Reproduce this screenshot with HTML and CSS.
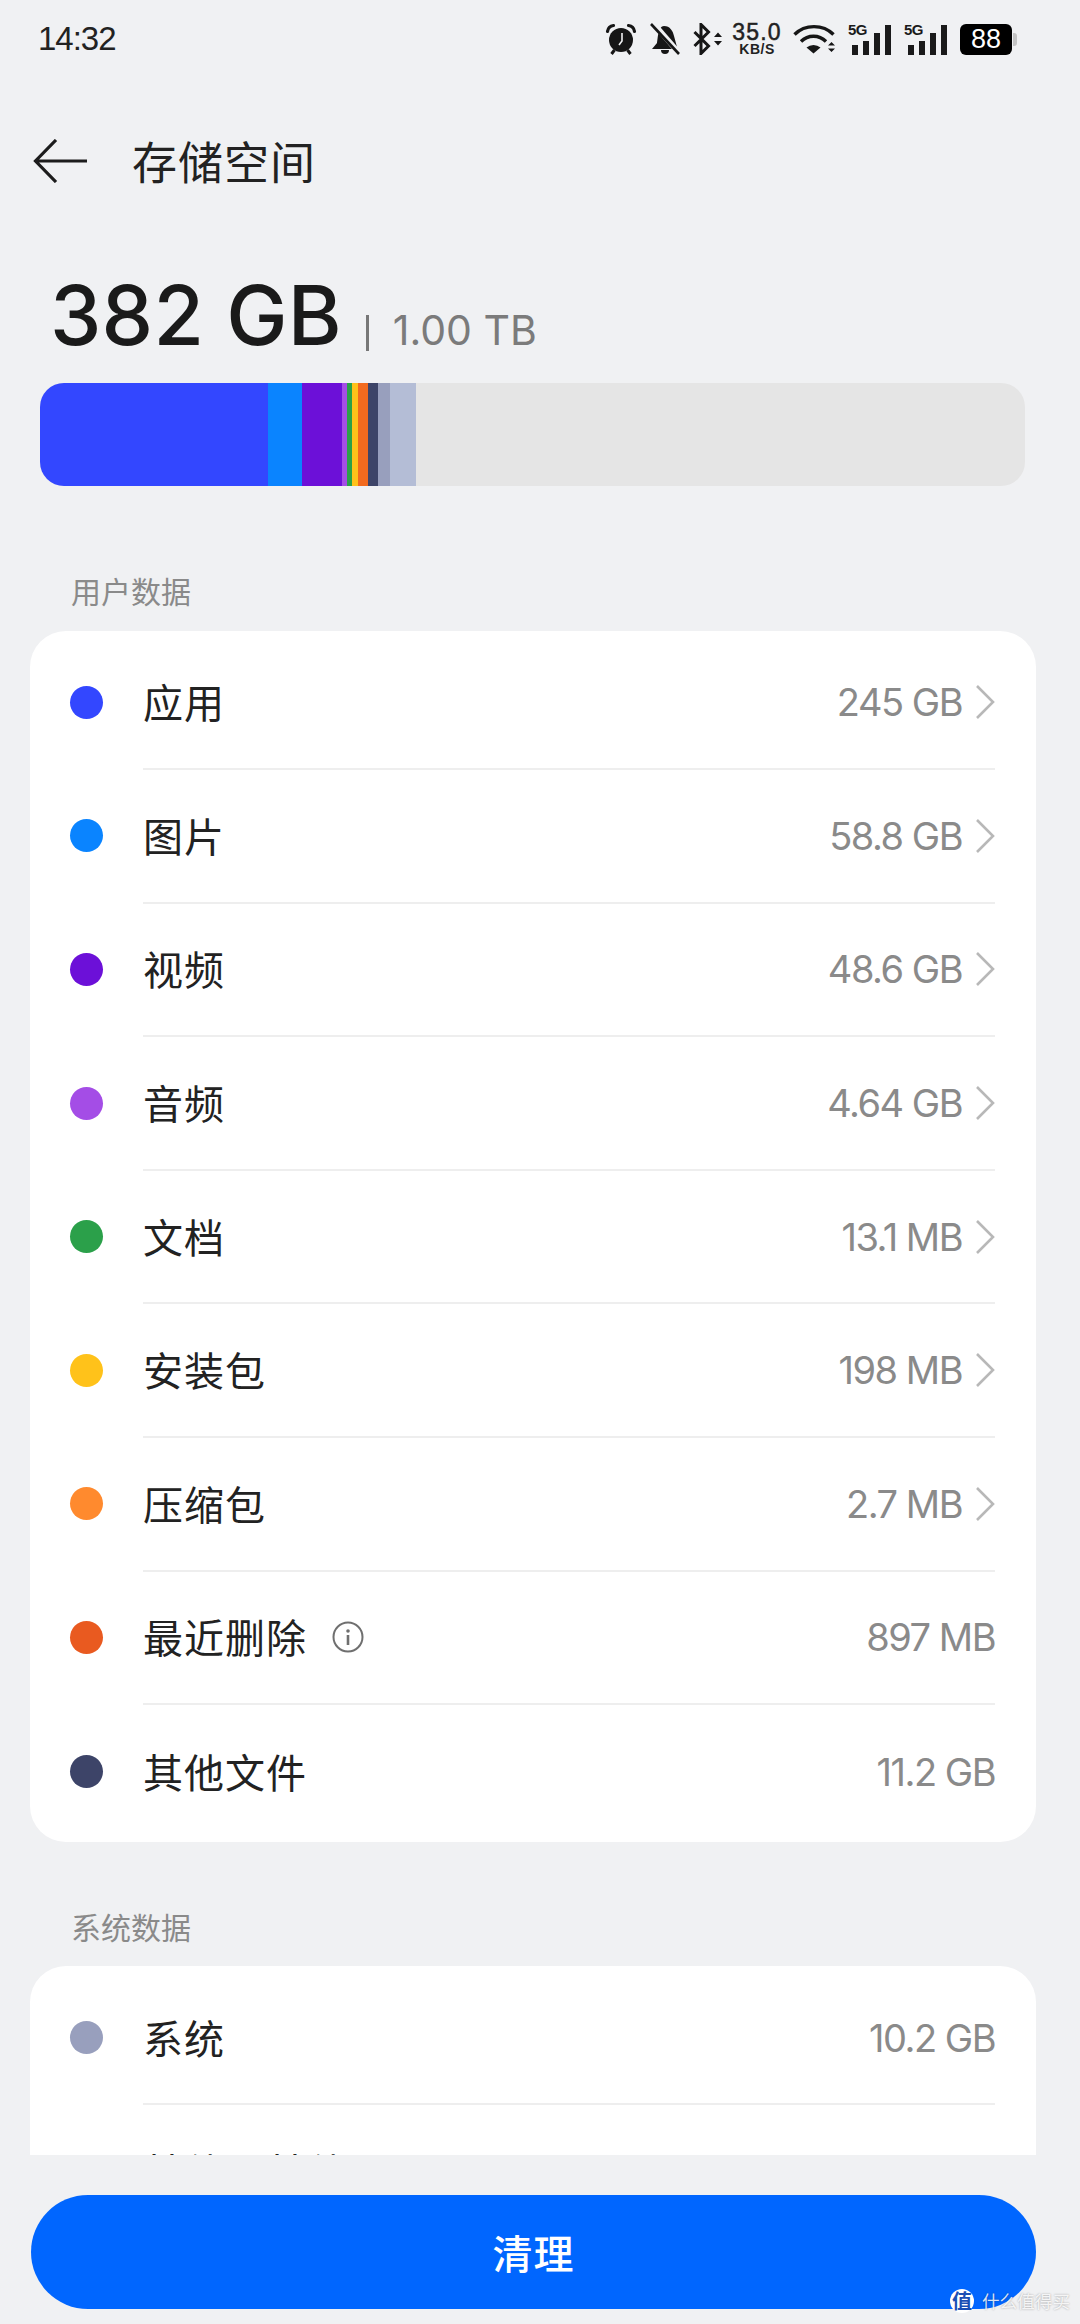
FILE: index.html
```html
<!DOCTYPE html>
<html lang="zh">
<head>
<meta charset="utf-8">
<title>存储空间</title>
<link rel="stylesheet" href="styles.css">
</head>
<body>
<div class="screen">
  <div class="status">
    <span class="time">14:32</span>
    <div class="status-icons">
      <svg class="ic" width="32" height="32" viewBox="0 0 32 32"><circle cx="16" cy="17" r="12" fill="#161616"/><path d="M2.500 8.500C3 5 5 3 8.500 2.500M29.500 8.500C29 5 27 3 23.500 2.500" stroke="#161616" stroke-width="3.200" fill="none" stroke-linecap="round"/><path d="M6.500 31l3-4M25.500 31l-3-4" stroke="#161616" stroke-width="3"/><path d="M17 10v8l-3 4" stroke="#f0f1f3" stroke-width="1.600" fill="none"/></svg>
      <svg class="ic" width="32" height="32" viewBox="0 0 32 32"><path d="M15 3c6 0 9 5 10 10l3 11-1 2H3l5-6c1-5 1-17 7-17z" fill="#161616"/><path d="M12 27a4 4 0 0 0 8 0z" fill="#161616"/><path d="M4 0l26 30" stroke="#f0f1f3" stroke-width="5.500"/><path d="M2 1l28 30" stroke="#161616" stroke-width="2.600"/></svg>
      <svg class="ic" width="32" height="32" viewBox="0 0 32 32"><path d="M1.500 9l14 14L8 30.500V1.500L15.500 9l-14 14" stroke="#161616" stroke-width="3" fill="none"/><path d="M21 14l4-4.500 4 4.500zM21 18l4 4.500 4-4.500z" fill="#161616"/></svg>
      <div class="speed"><span class="speed-n">35.0</span><span class="speed-u">KB/S</span></div>
      <svg class="ic ic-wifi" width="43" height="32" viewBox="0 0 43 32"><path d="M1.500 11.500C12 1 30 1 40.500 11.500M8 18.500C15 11.500 26 11.500 33 18.500" stroke="#161616" stroke-width="3.400" fill="none"/><path d="M13.500 24.500a11 11 0 0 1 14 0l-7 6z" fill="#161616"/><path d="M35 22.500l3.500-3.500 3.500 3.500zM35 25.500l3.500 3.500 3.500-3.500z" fill="#161616"/></svg>
      <div class="signal"><span class="five">5G</span><i class="b1"></i><i class="b2"></i><i class="b3"></i><i class="b4"></i></div>
      <div class="signal"><span class="five">5G</span><i class="b1"></i><i class="b2"></i><i class="b3"></i><i class="b4"></i></div>
      <div class="battery"><span class="batt-n">88</span></div>
    </div>
  </div>

  <div class="appbar">
    <svg class="back" width="54" height="44" viewBox="0 0 54 44"><path d="M23 1 2.500 22 23 43M2.500 22H54" stroke="#1c1c1c" stroke-width="3.200" fill="none"/></svg>
    <h1 class="page-title">存储空间</h1>
  </div>

  <div class="summary">
    <span class="used">382 GB</span>
    <span class="sep"></span>
    <span class="total">1.00 TB</span>
  </div>

  <div class="bar">
    <i class="seg s1"></i><i class="seg s2"></i><i class="seg s3"></i><i class="seg s4"></i><i class="seg s5"></i><i class="seg s6"></i><i class="seg s7"></i><i class="seg s8"></i><i class="seg s9"></i><i class="seg s10"></i>
  </div>

  <div class="scroll">
    <div class="section-label first">用户数据</div>
    <div class="card">
      <div class="row"><i class="dot d-apps"></i><div class="row-main"><span class="name">应用</span><span class="value">245 GB</span><svg class="chev" width="20" height="36" viewBox="0 0 20 36"><path d="M2 2l16 16L2 34" stroke="#b8b8b8" stroke-width="2.600" fill="none"/></svg></div></div>
      <div class="row"><i class="dot d-pic"></i><div class="row-main"><span class="name">图片</span><span class="value">58.8 GB</span><svg class="chev" width="20" height="36" viewBox="0 0 20 36"><path d="M2 2l16 16L2 34" stroke="#b8b8b8" stroke-width="2.600" fill="none"/></svg></div></div>
      <div class="row"><i class="dot d-vid"></i><div class="row-main"><span class="name">视频</span><span class="value">48.6 GB</span><svg class="chev" width="20" height="36" viewBox="0 0 20 36"><path d="M2 2l16 16L2 34" stroke="#b8b8b8" stroke-width="2.600" fill="none"/></svg></div></div>
      <div class="row"><i class="dot d-aud"></i><div class="row-main"><span class="name">音频</span><span class="value">4.64 GB</span><svg class="chev" width="20" height="36" viewBox="0 0 20 36"><path d="M2 2l16 16L2 34" stroke="#b8b8b8" stroke-width="2.600" fill="none"/></svg></div></div>
      <div class="row"><i class="dot d-doc"></i><div class="row-main"><span class="name">文档</span><span class="value">13.1 MB</span><svg class="chev" width="20" height="36" viewBox="0 0 20 36"><path d="M2 2l16 16L2 34" stroke="#b8b8b8" stroke-width="2.600" fill="none"/></svg></div></div>
      <div class="row"><i class="dot d-apk"></i><div class="row-main"><span class="name">安装包</span><span class="value">198 MB</span><svg class="chev" width="20" height="36" viewBox="0 0 20 36"><path d="M2 2l16 16L2 34" stroke="#b8b8b8" stroke-width="2.600" fill="none"/></svg></div></div>
      <div class="row"><i class="dot d-zip"></i><div class="row-main"><span class="name">压缩包</span><span class="value">2.7 MB</span><svg class="chev" width="20" height="36" viewBox="0 0 20 36"><path d="M2 2l16 16L2 34" stroke="#b8b8b8" stroke-width="2.600" fill="none"/></svg></div></div>
      <div class="row"><i class="dot d-del"></i><div class="row-main"><span class="name">最近删除</span><svg class="info" width="32" height="32" viewBox="0 0 32 32"><circle cx="16" cy="16" r="14.500" stroke="#6f6f6f" stroke-width="2" fill="none"/><circle cx="16" cy="10" r="1.800" fill="#6f6f6f"/><path d="M16 14v10" stroke="#6f6f6f" stroke-width="2.600"/></svg><span class="value">897 MB</span></div></div>
      <div class="row"><i class="dot d-oth"></i><div class="row-main"><span class="name">其他文件</span><span class="value">11.2 GB</span></div></div>
    </div>
    <div class="section-label">系统数据</div>
    <div class="card">
      <div class="row"><i class="dot d-sys"></i><div class="row-main"><span class="name">系统</span><span class="value">10.2 GB</span></div></div>
      <div class="row"><i class="dot d-cache"></i><div class="row-main"><span class="name">其他—其他</span></div></div>
    </div>
  </div>

  <div class="footer">
    <button class="clean">清理</button>
    <div class="watermark"><span class="wm-badge">值</span><span class="wm-text">什么值得买</span></div>
  </div>
</div>
</body>
</html>
```

FILE: styles.css
```css
* { box-sizing: border-box; margin: 0; padding: 0; }
html, body { width: 1080px; height: 2324px; overflow: hidden; background: #f0f1f3; }
body { font-family: "Inter", "Liberation Sans", "Noto Sans CJK SC", sans-serif; color: #1a1a1a; }
.screen { width: 1080px; height: 2324px; display: flex; flex-direction: column; }

.status { height: 74px; flex: none; padding: 22px 68px 0 38px; display: flex; justify-content: space-between; align-items: flex-start; }
.time { font-family: "Liberation Sans", sans-serif; font-size: 33px; line-height: 34px; color: #222; letter-spacing: -1px; }
.status-icons { display: flex; align-items: center; height: 34px; gap: 12px; }
.ic { display: block; flex: none; }
.speed { width: 48px; margin-left: -4px; display: flex; flex-direction: column; align-items: center; font-family: "Liberation Sans", sans-serif; color: #222; }
.speed-n { font-size: 23px; line-height: 19px; letter-spacing: 1.200px; -webkit-text-stroke: .5px #222; white-space: nowrap; }
.speed-u { font-size: 14px; line-height: 14px; font-weight: 700; letter-spacing: .5px; }
.signal { width: 44px; height: 32px; flex: none; position: relative; display: flex; align-items: flex-end; gap: 5px; padding-left: 4px; }
.signal i { width: 6px; background: #1a1a1a; display: block; }
.signal .b1 { height: 10px; }
.signal .b2 { height: 14px; }
.signal .b3 { height: 22px; }
.signal .b4 { height: 30px; }
.five { position: absolute; left: 0; top: 0; font-family: "Liberation Sans", sans-serif; font-size: 15px; font-weight: 700; letter-spacing: -.5px; line-height: 14px; }
.battery { width: 52px; height: 31px; flex: none; background: #000; border-radius: 6px; display: flex; align-items: center; justify-content: center; position: relative; }
.battery::after { content: ""; position: absolute; left: 53px; top: 9px; width: 4px; height: 13px; border-radius: 0 3px 3px 0; background: #c4c4c4; }
.batt-n { color: #fff; font-family: "Liberation Sans", sans-serif; font-size: 27px; line-height: 31px; }

.appbar { height: 74px; flex: none; margin-top: 50px; padding-left: 33px; display: flex; align-items: center; }
.back { display: block; flex: none; }
.page-title { font-family: "Noto Sans CJK SC", sans-serif; font-size: 45px; font-weight: 400; line-height: 60px; margin-left: 45px; letter-spacing: 1px; color: #222; }

.summary { margin-top: 69px; padding-left: 50px; height: 97px; flex: none; display: flex; align-items: baseline; }
.used { font-family: "Inter", sans-serif; font-size: 82px; line-height: 97px; font-weight: 500; color: #1a1a1a; letter-spacing: .2px; }
.sep { width: 3px; height: 36px; background: #777; margin-left: 24px; position: relative; top: 6px; }
.total { font-size: 41px; color: #7b7b7b; margin-left: 24px; letter-spacing: 0; }

.bar { margin: 19px 55px 0 40px; height: 103px; flex: none; border-radius: 24px; overflow: hidden; background: #e5e5e5; display: flex; }
.seg { display: block; height: 100%; flex: none; }
.s1 { width: 228px; background: #3347ff; }
.s2 { width: 34px; background: #0a84ff; }
.s3 { width: 40px; background: #6c10d8; }
.s4 { width: 5px; background: #a44de6; }
.s5 { width: 5px; background: #2ba04a; }
.s6 { width: 6px; background: #ffc21a; }
.s7 { width: 9.500px; background: #f26a1e; }
.s8 { width: 10.500px; background: #3d4468; }
.s9 { width: 12px; background: #989fbd; }
.s10 { width: 26px; background: #b4bdd6; }

.scroll { flex: 1; min-height: 0; overflow: hidden; padding: 0 44px 0 30px; }
.section-label { font-family: "Noto Sans CJK SC", sans-serif; font-size: 30px; line-height: 40px; color: #8a8a8a; padding-left: 41px; margin-top: 64px; margin-bottom: 20px; }
.section-label.first { margin-top: 84px; margin-bottom: 21px; }
.card { background: #fff; border-radius: 36px; padding: 5.500px 0 3.500px; }
.row { height: 133.600px; display: flex; align-items: center; padding-left: 40px; }
.dot { width: 33px; height: 33px; border-radius: 50%; flex: none; margin-right: 40px; position: relative; top: -1px; }
.d-apps { background: #3347ff; }
.d-pic { background: #0a84ff; }
.d-vid { background: #6c10d8; }
.d-aud { background: #a44de6; }
.d-doc { background: #2ba04a; }
.d-apk { background: #ffc21a; }
.d-zip { background: #ff8a2e; }
.d-del { background: #e95a20; }
.d-oth { background: #3d4468; }
.d-sys { background: #989fbd; }
.d-cache { background: #b4bdd6; }
.row-main { flex: 1; height: 100%; margin-right: 41px; display: flex; align-items: center; border-bottom: 2px solid #eeeeee; }
.row:last-child .row-main { border-bottom: none; }
.name { font-family: "Noto Sans CJK SC", sans-serif; font-size: 40px; line-height: 56px; padding-bottom: 2px; color: #222; letter-spacing: 1px; }
.value { margin-left: auto; font-size: 38px; color: #8a8a8a; letter-spacing: -1.500px; }
.chev { margin-left: 13px; display: block; flex: none; }
.info { margin-left: 25px; display: block; flex: none; }

.footer { height: 169px; flex: none; position: relative; padding: 40px 44px 0 31px; }
.clean { display: block; width: 1005px; height: 114px; border: none; border-radius: 57px; background: #0066ff; color: #fff; font-family: "Noto Sans CJK SC", sans-serif; font-size: 40px; font-weight: 500; letter-spacing: 1px; }
.watermark { position: absolute; left: 950px; top: 134px; display: flex; align-items: center; gap: 8px; }
.wm-badge { width: 24px; height: 24px; flex: none; border-radius: 50%; background: #fff; color: #1b4fb5; font-family: "Noto Sans CJK SC", sans-serif; font-size: 20px; line-height: 24px; text-align: center; font-weight: 700; }
.wm-text { font-family: "Noto Sans CJK SC", sans-serif; font-size: 17.600px; line-height: 24px; color: rgba(255,255,255,.85); white-space: nowrap; text-shadow: 0 0 2px rgba(0,0,0,.35); }
```
